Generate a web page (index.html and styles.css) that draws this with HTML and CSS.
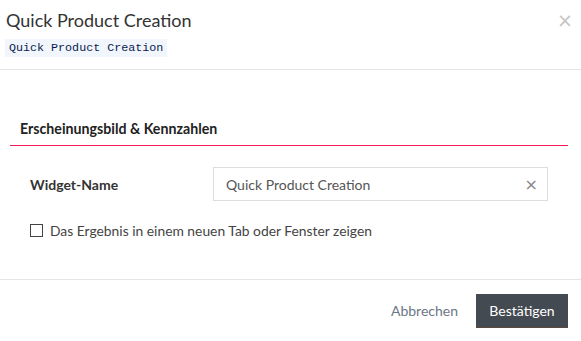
FILE: index.html
```html
<!DOCTYPE html>
<html lang="de">
<head>
  <meta charset="UTF-8">
  <title>Quick Product Creation</title>
  <link rel="stylesheet" href="styles.css">
</head>
<body>

  <div class="modal">
    <div class="modal-header">
      <div>
        <h1 class="modal-title">Quick Product Creation</h1>
        <code class="widget-id">Quick Product Creation</code>
      </div>
      <span class="close">&times;</span>
    </div>

    <div class="modal-body">
      <h2 class="section-title">Erscheinungsbild &amp; Kennzahlen</h2>
      <div class="section-rule"></div>

      <div class="form-row">
        <label class="form-label">Widget-Name</label>
        <div class="input-box">
          <span>Quick Product Creation</span>
          <span class="clear">&times;</span>
        </div>
      </div>

      <div class="check-row">
        <span class="checkbox"></span>
        <span>Das Ergebnis in einem neuen Tab oder Fenster zeigen</span>
      </div>
    </div>

    <div class="modal-footer">
      <a class="cancel">Abbrechen</a>
      <button class="confirm">Bestätigen</button>
    </div>
  </div>

</body>
</html>
```

FILE: styles.css
```css
body {
  margin: 0;
  font-family: 'Lato', sans-serif;
  background-color: white;
  color: #333;
}

.modal {
  width: 581px;
  height: 341px;
  display: flex;
  flex-direction: column;
}

.modal-header {
  height: 70px;
  box-sizing: border-box;
  border-bottom: 1px solid #e5e5e5;
  display: flex;
  justify-content: space-between;
  padding: 9px 8px 0 5px;
}

.modal-title {
  margin: 0 0 4px 1px;
  font-size: 18px;
  font-weight: normal;
  line-height: 22px;
  color: #333;
}

.widget-id {
  display: inline-block;
  background-color: #f0f6fc;
  color: #0b1b4f;
  font-family: 'Liberation Mono', monospace;
  font-size: 11.7px;
  line-height: 18px;
  padding: 0 4px 0 4px;
}

.close {
  color: #c4c4c4;
  font-size: 19px;
  line-height: 20px;
  margin-top: 1px;
  font-family: 'DejaVu Sans', sans-serif;
}

.modal-body {
  height: 210px;
  box-sizing: border-box;
  padding: 50px 13px 0 10px;
  border-bottom: 1px solid #e5e5e5;
}

.section-title {
  margin: 0;
  padding: 0 0 7px 10px;
  font-size: 14.2px;
  font-weight: bold;
  line-height: 18px;
  color: #222;
}

.section-rule {
  height: 1px;
  background-color: #f01b55;
}

.form-row {
  display: flex;
  align-items: center;
  margin-top: 21px;
  padding-left: 20px;
}

.form-label {
  width: 183px;
  font-size: 14px;
  font-weight: bold;
  color: #333;
}

.input-box {
  width: 335px;
  height: 34px;
  box-sizing: border-box;
  border: 1px solid #ddd;
  display: flex;
  align-items: center;
  justify-content: space-between;
  padding: 0 9px 0 12px;
  font-size: 14px;
  color: #555;
}

.clear {
  color: #888;
  font-size: 16px;
  font-family: 'DejaVu Sans', sans-serif;
}

.check-row {
  display: flex;
  align-items: center;
  margin-top: 21px;
  padding-left: 20px;
  font-size: 13.85px;
  color: #444;
}

.checkbox {
  width: 11px;
  height: 11px;
  border: 1px solid #444;
  margin-right: 7px;
}

.modal-footer {
  flex: 1;
  display: flex;
  justify-content: flex-end;
  align-items: center;
  padding: 0 13px 0 0;
}

.cancel {
  color: #6b7785;
  font-size: 14px;
  margin-right: 18px;
}

.confirm {
  background-color: #434a52;
  color: white;
  border: none;
  border-bottom: 1px solid #5a4a3e;
  font-family: 'Lato', sans-serif;
  font-size: 14px;
  width: 92px;
  height: 34px;
  padding: 0;
}
```
